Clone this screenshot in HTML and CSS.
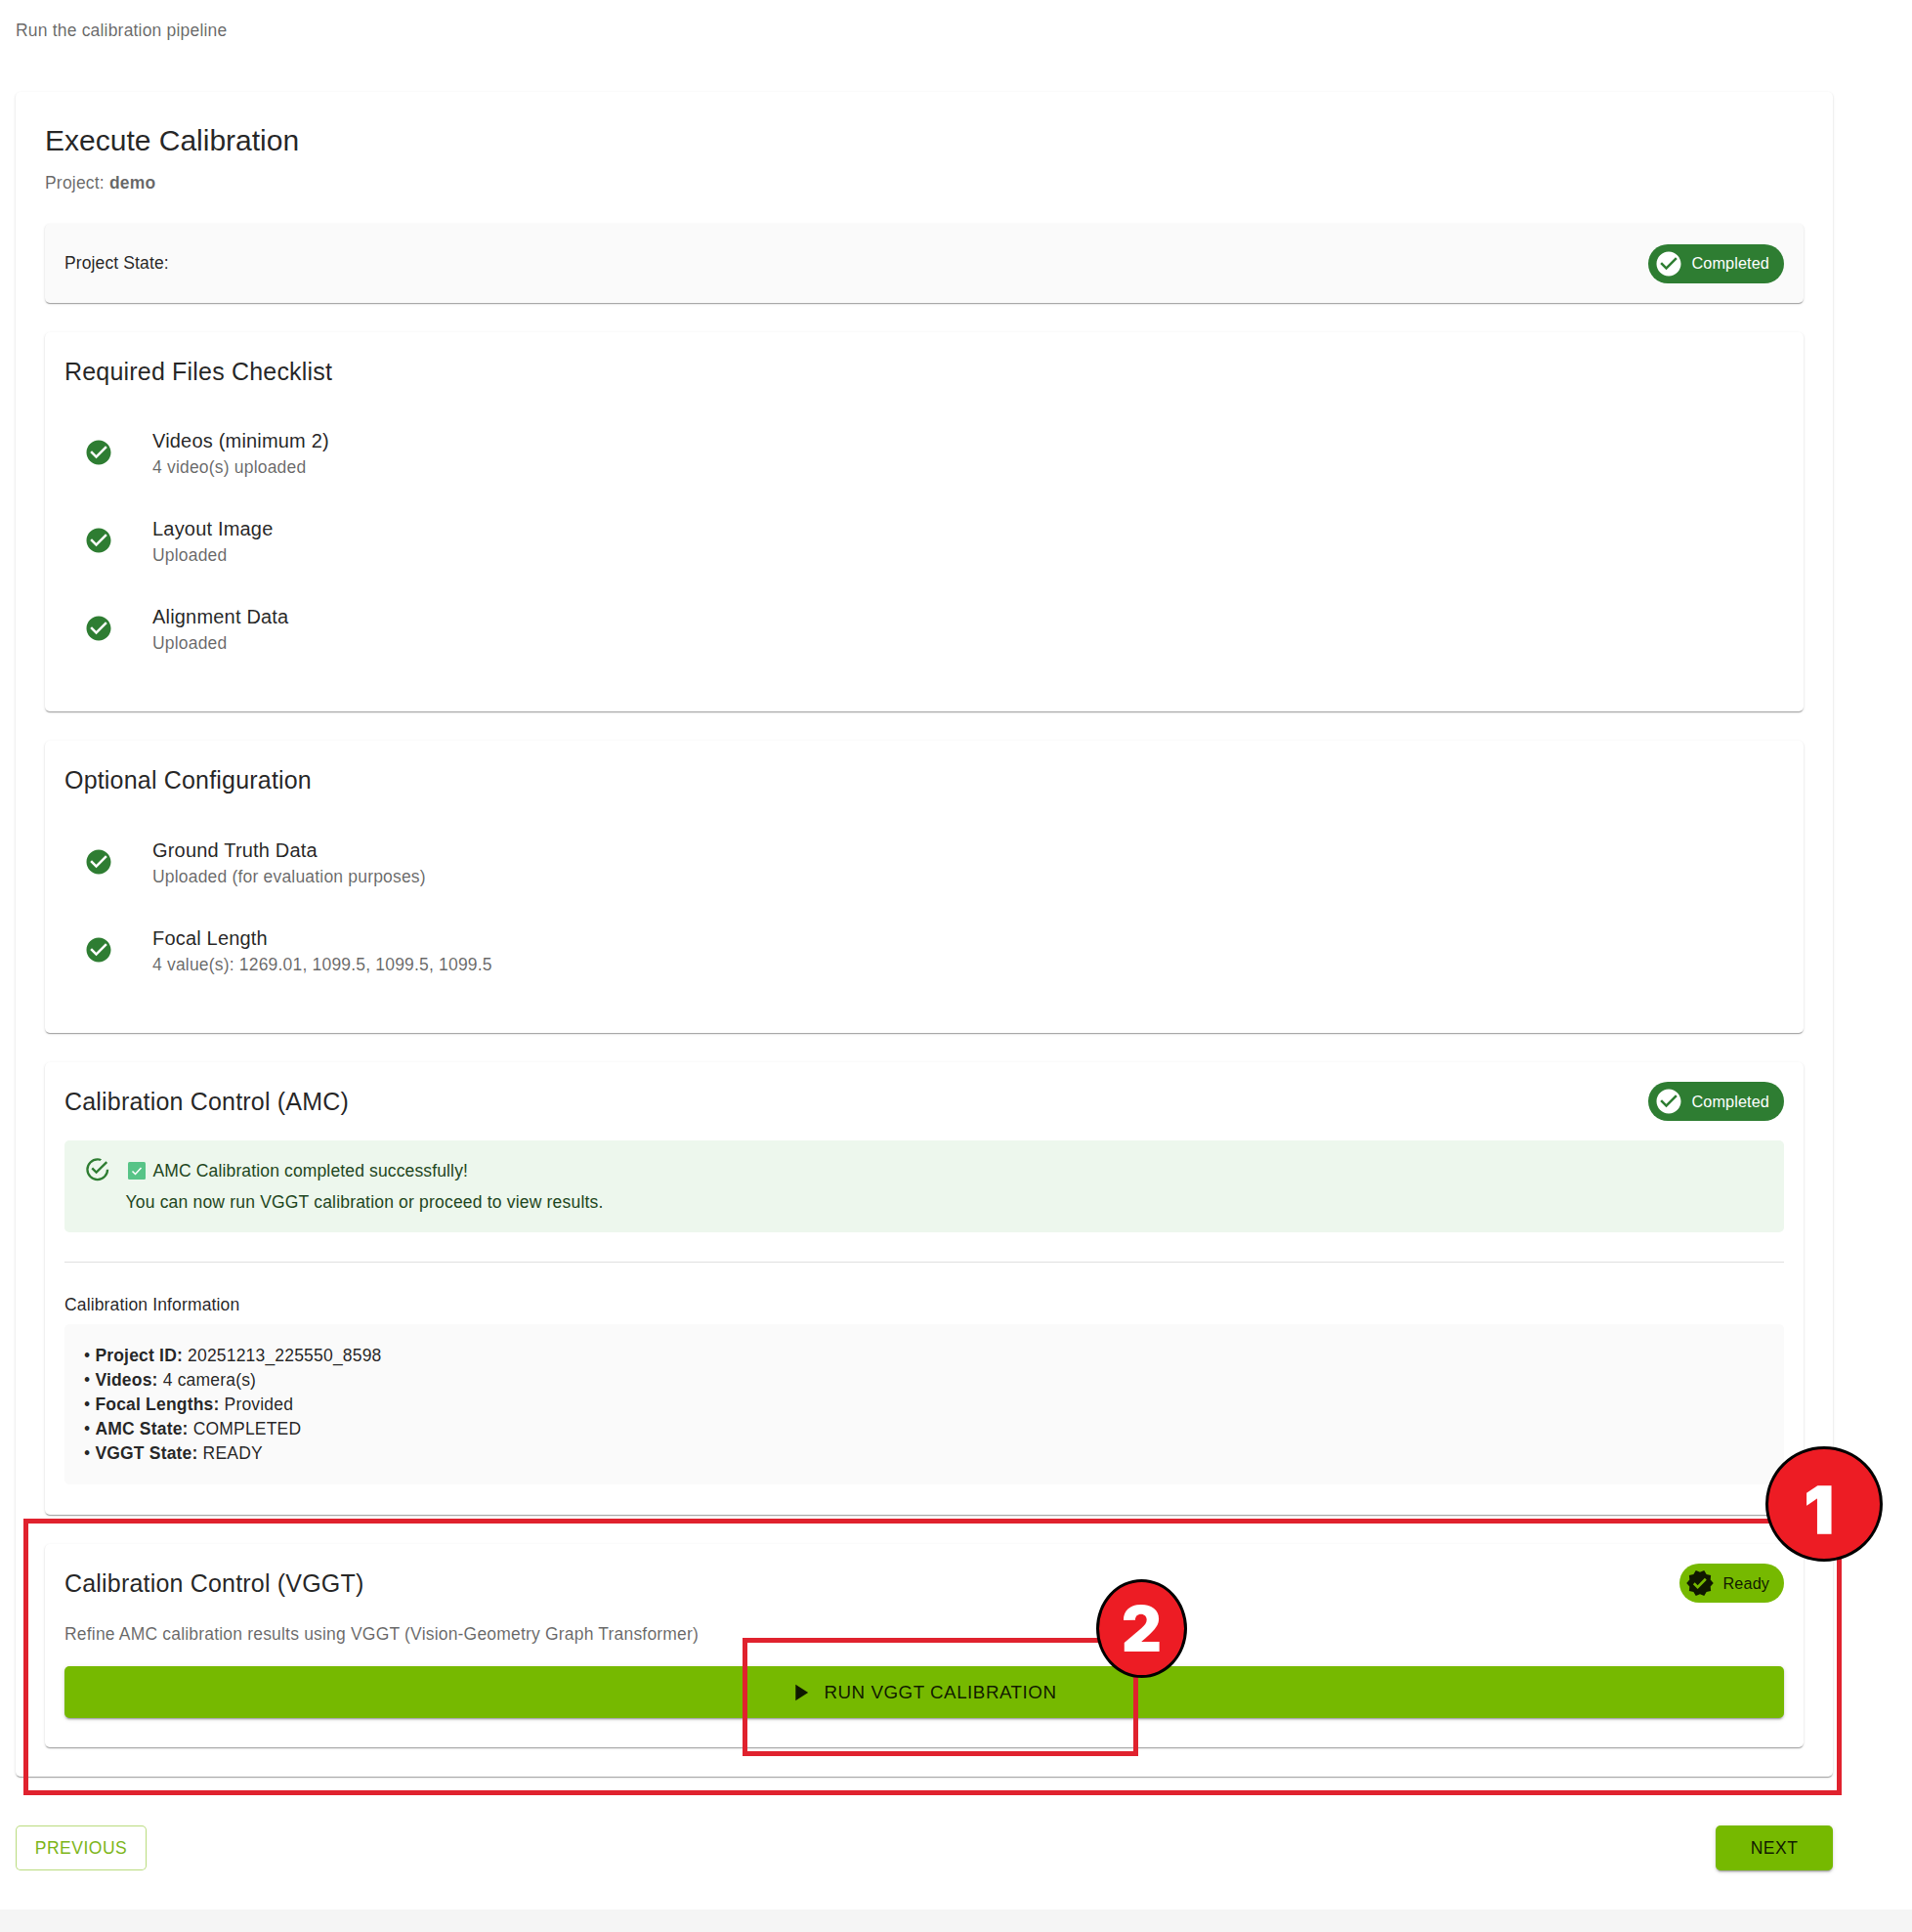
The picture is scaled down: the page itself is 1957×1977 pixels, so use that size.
FILE: index.html
```html
<!DOCTYPE html>
<html lang="en">
<head>
<meta charset="utf-8">
<title>Execute Calibration</title>
<link rel="stylesheet" href="styles.css">
</head>
<body>
<svg class="defs" width="0" height="0" aria-hidden="true">
  <symbol id="check-circle" viewBox="0 0 24 24"><path d="M12 2C6.48 2 2 6.48 2 12s4.48 10 10 10 10-4.48 10-10S17.52 2 12 2zm-2 15-5-5 1.41-1.41L10 14.17l7.59-7.59L19 8l-9 9z"/></symbol>
</svg>
<main class="page">
  <p class="subtitle">Run the calibration pipeline</p>
  <section class="outer">
    <h1 class="page-title">Execute Calibration</h1>
    <p class="project">Project: <strong>demo</strong></p>

    <div class="card state-card">
      <span class="state-label">Project State:</span>
      <span class="chip chip-done"><svg class="chip-icon"><use href="#check-circle"/></svg>Completed</span>
    </div>

    <div class="card list-card">
      <h2 class="card-title">Required Files Checklist</h2>
      <ul class="list list-first">
        <li class="item"><svg class="item-icon"><use href="#check-circle"/></svg><div><div class="primary">Videos (minimum 2)</div><div class="secondary">4 video(s) uploaded</div></div></li>
        <li class="item"><svg class="item-icon"><use href="#check-circle"/></svg><div><div class="primary">Layout Image</div><div class="secondary">Uploaded</div></div></li>
        <li class="item"><svg class="item-icon"><use href="#check-circle"/></svg><div><div class="primary">Alignment Data</div><div class="secondary">Uploaded</div></div></li>
      </ul>
    </div>

    <div class="card list-card">
      <h2 class="card-title">Optional Configuration</h2>
      <ul class="list">
        <li class="item"><svg class="item-icon"><use href="#check-circle"/></svg><div><div class="primary">Ground Truth Data</div><div class="secondary">Uploaded (for evaluation purposes)</div></div></li>
        <li class="item"><svg class="item-icon"><use href="#check-circle"/></svg><div><div class="primary">Focal Length</div><div class="secondary">4 value(s): 1269.01, 1099.5, 1099.5, 1099.5</div></div></li>
      </ul>
    </div>

    <div class="card amc-card">
      <div class="card-head">
        <h2 class="card-title">Calibration Control (AMC)</h2>
        <span class="chip chip-done"><svg class="chip-icon"><use href="#check-circle"/></svg>Completed</span>
      </div>
      <div class="alert">
        <svg class="alert-icon" viewBox="0 0 24 24"><path d="M20,12A8,8 0 0,1 12,20A8,8 0 0,1 4,12A8,8 0 0,1 12,4C12.76,4 13.5,4.11 14.2,4.31L15.77,2.74C14.61,2.26 13.34,2 12,2A10,10 0 0,0 2,12A10,10 0 0,0 12,22A10,10 0 0,0 22,12M7.91,10.08L6.5,11.5L11,16L21,6L19.59,4.58L11,13.17L7.91,10.08Z"/></svg>
        <div class="alert-body">
          <div class="alert-line"><svg class="emoji" viewBox="0 0 18 18"><rect width="18" height="18" rx="1.5" fill="#57c487"/><path d="M4.5 9.5l3 3 6-6.5" fill="none" stroke="#fff" stroke-width="1.5"/></svg><span class="alert-head">AMC Calibration completed successfully!</span></div>
          <div class="alert-line">You can now run VGGT calibration or proceed to view results.</div>
        </div>
      </div>
      <hr class="divider">
      <h3 class="info-title">Calibration Information</h3>
      <div class="info">
        <div>• <strong>Project ID:</strong> 20251213_225550_8598</div>
        <div>• <strong>Videos:</strong> 4 camera(s)</div>
        <div>• <strong>Focal Lengths:</strong> Provided</div>
        <div>• <strong>AMC State:</strong> COMPLETED</div>
        <div>• <strong>VGGT State:</strong> READY</div>
      </div>
    </div>

    <div class="card vggt-card">
      <div class="card-head">
        <h2 class="card-title">Calibration Control (VGGT)</h2>
        <span class="chip chip-ready"><svg class="chip-icon" viewBox="0 0 24 24"><path d="m23 12-2.44-2.78.34-3.68-3.61-.82-1.89-3.18L12 3 8.6 1.54 6.71 4.72l-3.61.81.34 3.68L1 12l2.44 2.78-.34 3.69 3.61.82 1.89 3.18L12 21l3.4 1.46 1.89-3.18 3.61-.82-.34-3.68L23 12zm-12.91 4.72-3.8-3.81 1.48-1.48 2.32 2.33 5.85-5.87 1.48 1.48-7.33 7.35z"/></svg>Ready</span>
      </div>
      <p class="desc">Refine AMC calibration results using VGGT (Vision-Geometry Graph Transformer)</p>
      <button class="btn btn-run" type="button"><svg class="play" viewBox="0 0 24 24"><path d="M8 5v14l11-7z"/></svg>RUN VGGT CALIBRATION</button>
    </div>
  </section>

  <nav class="nav">
    <button class="btn btn-outline" type="button">PREVIOUS</button>
    <button class="btn btn-next" type="button">NEXT</button>
  </nav>
</main>
<div class="footer-strip"></div>

<div class="mark mark-one"></div>
<div class="mark mark-two"></div>
<div class="badge badge-one">1</div>
<div class="badge badge-two">2</div>
</body>
</html>
```
FILE: styles.css
```css
* { box-sizing: border-box; }
html, body { margin: 0; padding: 0; }
body {
  position: relative;
  min-height: 1977px;
  background: #fff;
  font-family: "Liberation Sans", Arial, sans-serif;
  color: rgba(0, 0, 0, 0.87);
  overflow-x: hidden;
}
.defs { position: absolute; }
.page { width: 1860px; margin-left: 16px; padding-top: 18px; }
.subtitle {
  margin: 0 0 50px;
  font-size: 17.5px;
  line-height: 26px;
  letter-spacing: 0.19px;
  color: rgba(0, 0, 0, 0.6);
}
.outer, .card {
  background: #fff;
  border-radius: 5px;
  box-shadow: 0 2px 1px -1px rgba(0, 0, 0, 0.2), 0 1px 1px 0 rgba(0, 0, 0, 0.14), 0 1px 3px 0 rgba(0, 0, 0, 0.12);
}
.outer { padding: 30px 30px 30px; display: flex; flex-direction: column; }
.page-title { margin: 0; font-size: 30px; line-height: 40px; font-weight: 400; }
.project {
  margin: 11px 0 29px;
  font-size: 17.5px;
  line-height: 25px;
  letter-spacing: 0.19px;
  color: rgba(0, 0, 0, 0.6);
}
.card { margin-bottom: 30px; padding: 20px; }
.card:last-child { margin-bottom: 0; }
.state-card {
  display: flex;
  justify-content: space-between;
  align-items: center;
  height: 81px;
  background: #fafafa;
}
.state-label { font-size: 17.5px; letter-spacing: 0.12px; }
.chip {
  display: inline-flex;
  align-items: center;
  height: 40px;
  padding: 0 15px 0 6px;
  border-radius: 20px;
  font-size: 16.25px;
  letter-spacing: 0.1px;
}
.chip-icon { width: 30px; height: 30px; fill: currentColor; margin-right: 9px; flex: none; }
.chip-done { background: #2e7d32; color: #fff; }
.chip-ready { background: #76b900; color: rgba(0, 0, 0, 0.87); }
.card-title {
  margin: 0;
  font-size: 25px;
  line-height: 40px;
  font-weight: 400;
  letter-spacing: 0.19px;
}
.list { list-style: none; margin: 19px 0 0; padding: 0 0 20px; }
.list-first { margin-top: 18px; }
.item { display: flex; align-items: center; height: 90px; padding-left: 20px; }
.item-icon { width: 30px; height: 30px; margin-right: 40px; fill: #2e7d32; flex: none; }
.primary { font-size: 20px; line-height: 29px; letter-spacing: 0.19px; }
.secondary { font-size: 17.5px; line-height: 24px; letter-spacing: 0.19px; color: rgba(0, 0, 0, 0.6); }
.card-head { display: flex; justify-content: space-between; align-items: center; height: 40px; }
.amc-card { padding-bottom: 31px; }
.alert {
  display: flex;
  margin-top: 20px;
  padding: 19px 20px 18px;
  height: 94px;
  border-radius: 5px;
  background: #edf7ed;
  color: #1e4620;
  font-size: 17.5px;
  letter-spacing: 0.19px;
}
.alert-icon { width: 27.5px; height: 27.5px; margin-top: -3px; fill: #2e7d32; margin-right: 15px; flex: none; }
.alert-line { display: flex; align-items: center; height: 25px; margin-bottom: 7px; }
.alert-head { letter-spacing: 0.14px; }
.emoji { width: 18px; height: 18px; margin: -2px 8px 0 2px; flex: none; }
.divider { height: 1px; margin: 30px 0 31px; border: 0; background: #e0e0e0; }
.info-title {
  margin: 0 0 7px;
  font-size: 17.5px;
  line-height: 25px;
  font-weight: 400;
  letter-spacing: 0.14px;
}
.info {
  height: 164px;
  padding: 20px;
  border-radius: 5px;
  background: #fafafa;
  font-size: 17.5px;
  line-height: 25px;
  letter-spacing: 0.19px;
}
.vggt-card { padding-bottom: 30px; }
.desc {
  margin: 20px 0 20px;
  font-size: 17.5px;
  line-height: 25px;
  letter-spacing: 0.19px;
  color: rgba(0, 0, 0, 0.6);
}
.btn {
  display: inline-flex;
  align-items: center;
  justify-content: center;
  border: 0;
  border-radius: 5px;
  font-family: inherit;
  font-size: 17.5px;
  letter-spacing: 0.5px;
  cursor: pointer;
}
.btn-run, .btn-next {
  background: #76b900;
  color: rgba(0, 0, 0, 0.87);
  box-shadow: 0 3px 1px -2px rgba(0, 0, 0, 0.2), 0 2px 2px 0 rgba(0, 0, 0, 0.14), 0 1px 5px 0 rgba(0, 0, 0, 0.12);
}
.btn-run { width: 100%; height: 53px; padding: 0 5px 0 0; font-size: 18.75px; letter-spacing: 0.53px; }
.play { width: 28px; height: 28px; margin-right: 10px; fill: rgba(0, 0, 0, 0.87); flex: none; }
.nav { display: flex; justify-content: space-between; margin-top: 50px; }
.btn-outline {
  width: 134px;
  height: 46px;
  background: #fff;
  color: #7cb518;
  border: 1px solid rgba(118, 185, 0, 0.5);
}
.btn-next { width: 120px; height: 46px; }
.footer-strip {
  position: absolute;
  left: 0;
  right: 0;
  top: 1954px;
  height: 23px;
  background: #f5f5f5;
}
.mark { position: absolute; border: 5px solid #e0222e; }
.mark-one { left: 24px; top: 1554px; width: 1861px; height: 283px; }
.mark-two { left: 760px; top: 1676px; width: 405px; height: 121px; }
.badge {
  position: absolute;
  display: flex;
  align-items: center;
  justify-content: center;
  border: 3px solid #000;
  border-radius: 50%;
  background: #ed1c24;
  color: #fff;
  font-family: Inter, "Liberation Sans", sans-serif;
  font-weight: 900;
  font-size: 64px;
  line-height: 1;
}
.badge-one { left: 1807px; top: 1480px; width: 120px; height: 118px; padding: 12px 10px 0 0; font-size: 66px; -webkit-text-stroke: 1.5px #fff; }
.badge-two { left: 1122px; top: 1616px; width: 93px; height: 101px; }
```
